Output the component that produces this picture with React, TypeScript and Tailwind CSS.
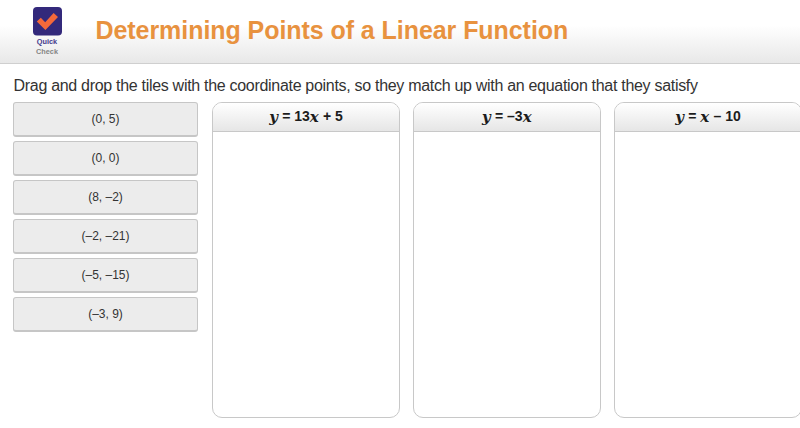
import { Fragment } from "react";

const tiles = ["(0, 5)", "(0, 0)", "(8, –2)", "(–2, –21)", "(–5, –15)", "(–3, 9)"];

const equations = ["y = 13x + 5", "y = –3x", "y = x – 10"];

function QuickCheckLogo() {
  return (
    <div className="flex w-[60px] flex-col items-center pt-[7px] text-[7.3px] leading-[9px] font-bold">
      <svg width="29" height="29" viewBox="0 0 29 29">
        <rect width="29" height="28.5" rx="4" fill="#33297b" />
        <path d="M3.8 14.6 L7.8 10.8 L12.2 15.2 L20.6 6 L25 9.9 L12.4 23 Z" fill="#f4693a" />
      </svg>
      <span className="mt-px text-[#43398c]">Quick</span>
      <span className="mt-px text-[#858585]">Check</span>
    </div>
  );
}

function Tile({ label }: { label: string }) {
  return (
    <div className="flex h-[35px] items-center justify-center rounded-[3px] border border-b-2 border-[#c6c6c6] bg-[#ececec] text-[12px] text-[#333]">
      {label}
    </div>
  );
}

// Variables are set in a serif italic, everything else in the heading face.
function Equation({ text }: { text: string }) {
  return (
    <span className="leading-5 whitespace-pre">
      {text.split(/([xy])/).map((part, i) => (
        <Fragment key={i}>
          {/^[xy]$/.test(part) ? (
            <i className="align-[-1px] font-['DejaVu_Serif',serif] text-[15px] leading-none tracking-[0.4px]">{part}</i>
          ) : (
            part
          )}
        </Fragment>
      ))}
    </span>
  );
}

function DropColumn({ equation }: { equation: string }) {
  return (
    <section className="flex w-[188px] shrink-0 flex-col overflow-hidden rounded-[10px] border border-[#c8c8c8] bg-white">
      <h2 className="flex h-[29px] items-center justify-center border-b border-[#c8c8c8] bg-linear-to-b from-white to-[#e6e6e6] pb-[2px] text-[14px] font-bold text-[#1c1c1c]">
        <Equation text={equation} />
      </h2>
    </section>
  );
}

export default function App() {
  return (
    <div className="h-[428px] w-[800px] overflow-hidden bg-white font-['Liberation_Sans',Arial,sans-serif]">
      <header className="flex h-16 border-b border-[#cfcfcf] bg-linear-to-b from-white from-40% to-[#e8e8e8] pl-[17px]">
        <QuickCheckLogo />
        <h1 className="ml-[18.5px] pt-[14px] text-[25px] leading-8 font-bold tracking-[-0.06px] whitespace-nowrap text-[#e8923f]">
          Determining Points of a Linear Function
        </h1>
      </header>
      <p className="h-[38px] pt-[12px] pl-[13.5px] text-[16px] leading-5 tracking-[-0.3px] whitespace-nowrap text-[#333]">
        Drag and drop the tiles with the coordinate points, so they match up with an equation that they satisfy
      </p>
      <main className="flex h-[316px] pl-[13px]">
        <div className="flex w-[185px] shrink-0 flex-col gap-1">
          {tiles.map((label) => (
            <Tile key={label} label={label} />
          ))}
        </div>
        <div className="ml-[14px] flex shrink-0 gap-[13px]">
          {equations.map((equation) => (
            <DropColumn key={equation} equation={equation} />
          ))}
        </div>
      </main>
    </div>
  );
}
